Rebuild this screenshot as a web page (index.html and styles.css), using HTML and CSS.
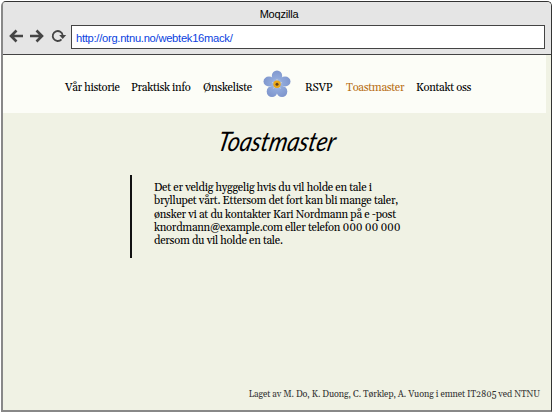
FILE: index.html
```html
<!DOCTYPE html>
<html lang="no">
<head>
<meta charset="utf-8">
<title>Moqzilla</title>
<link rel="stylesheet" href="styles.css">
</head>
<body>
<div class="window">
  <header class="chrome">
    <div class="title">Moqzilla</div>
    <div class="toolbar">
      <svg class="controls" width="60" height="18" viewBox="0 0 60 18" fill="none" stroke="#454545">
        <path d="M15 9H3M8.500 3.500L3 9l5.500 5.500" stroke-width="2.600"/>
        <path d="M22 9h12M28.500 3.500L34 9l-5.500 5.500" stroke-width="2.600"/>
        <path d="M53.500 12.300A5 5 0 1 1 54.700 8.500" stroke-width="1.800"/>
        <path d="M51.200 8h7l-3.500 4z" fill="#454545" stroke="none"/>
      </svg>
      <div class="address">http://org.ntnu.no/webtek16mack/</div>
    </div>
  </header>
  <nav class="nav">
    <a class="n1">Vår historie</a>
    <a class="n2">Praktisk info</a>
    <a class="n3">Ønskeliste</a>
    <svg class="flower" width="28" height="28" viewBox="0 0 28 28">
      <defs>
        <radialGradient id="petal" cx="14" cy="14" r="14" gradientUnits="userSpaceOnUse">
          <stop offset="0" stop-color="#b9c6df"/>
          <stop offset=".45" stop-color="#8fa8da"/>
          <stop offset="1" stop-color="#7f96cd"/>
        </radialGradient>
      </defs>
      <g fill="url(#petal)">
        <ellipse cx="14" cy="6" rx="5.200" ry="5.500"/>
        <ellipse cx="6" cy="11.500" rx="5.500" ry="5"/>
        <ellipse cx="22" cy="11.500" rx="5.500" ry="5"/>
        <ellipse cx="9" cy="21.500" rx="5.300" ry="5.500"/>
        <ellipse cx="19" cy="21.500" rx="5.300" ry="5.500"/>
        <circle cx="14" cy="14" r="6"/>
      </g>
      <path d="M14 14V9M14 14l-5-1.500M14 14l5-1.500M14 14l-3.500 4.500M14 14l3.500 4.500" stroke="#c8d0d8" stroke-width="1"/>
      <circle cx="14" cy="14.300" r="3.700" fill="#eaa818"/>
      <circle cx="14" cy="14.300" r="1.500" fill="#63401c"/>
    </svg>
    <a class="n4">RSVP</a>
    <a class="n5 active">Toastmaster</a>
    <a class="n6">Kontakt oss</a>
  </nav>
  <main class="content">
    <h1><span>Toastmaster</span></h1>
    <div class="quote">
      <div>Det er veldig hyggelig hvis du vil holde en tale i</div>
      <div>bryllupet vårt. Ettersom det fort kan bli mange taler,</div>
      <div>ønsker vi at du kontakter Kari Nordmann på e -post</div>
      <div>knordmann@example.com eller telefon 000 00 000</div>
      <div>dersom du vil holde en tale.</div>
    </div>
  </main>
  <footer>Laget av M. Do, K. Duong, C. Tørklep, A. Vuong i emnet IT2805 ved NTNU</footer>
</div>
</body>
</html>
```
FILE: styles.css
```css
* { box-sizing: border-box; }
body { margin: 0; background: #fff; }
.window {
  width: 551px;
  height: 411px;
  margin: 1px 0 0 1px;
  display: flex;
  flex-direction: column;
  background: #f0f2e4;
  border: 1px solid #333;
  border-left: 2px solid #888;
  border-bottom: 2px solid #888;
  border-radius: 5px 5px 0 0;
  font-family: Gelasio, Georgia, "Liberation Serif", serif;
  color: #000;
  overflow: hidden;
}
.chrome {
  height: 53px;
  flex: none;
  background: #e5e5e5;
  border-bottom: 1px solid #444;
  font-family: "Liberation Sans", sans-serif;
}
.title {
  height: 23px;
  padding: 6px 0 0 4px;
  line-height: 13px;
  font-size: 11px;
  letter-spacing: -.2px;
  text-align: center;
}
.toolbar { display: flex; padding-left: 5px; }
.controls { margin: 2px 3px 0 0; }
.address {
  width: 474px;
  height: 24px;
  background: #fff;
  border: 1px solid #444;
  padding-left: 4px;
  font-size: 11.200px;
  letter-spacing: -.28px;
  line-height: 25px;
  color: #0b3fe0;
}
.nav {
  display: flex;
  align-items: flex-start;
  flex: none;
  width: 543px;
  height: 58px;
  padding: 15px 0 0 62px;
  background: #fcfdf7;
  font-size: 11.200px;
  letter-spacing: -.29px;
  line-height: 14px;
}
.nav a { padding-top: 11px; white-space: nowrap; }
.n1 { width: 66px; }
.n2 { width: 72px; }
.n3 { width: 60px; }
.n4 { width: 41px; }
.n5 { width: 70px; }
.active { color: #b86f14; }
.flower { margin-right: 14px; }
.content { flex: 1; }
h1 {
  margin: 9px 0 0 214px;
  height: 54px;
  font: italic 27px/38px Lato, sans-serif;
  color: #000;
}
h1 span {
  display: inline-block;
  transform-origin: 0 70%;
  transform: skewX(-12deg) scaleX(.855);
}
.quote {
  margin: -1px 0 0 127px;
  height: 83px;
  border-left: 2px solid #111;
  padding: 7px 0 0 22px;
  font-size: 11.200px;
  letter-spacing: -.27px;
  line-height: 13.250px;
  white-space: nowrap;
}
footer {
  height: 22px;
  padding-right: 11px;
  text-align: right;
  font-size: 9px;
  letter-spacing: -.09px;
  line-height: 13px;
  color: #333;
}
```
